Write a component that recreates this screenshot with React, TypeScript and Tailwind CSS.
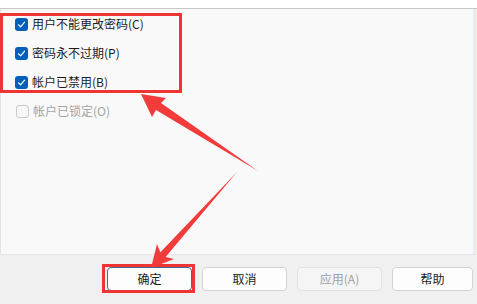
import React from "react";

type Item = { label: string; checked: boolean; disabled?: boolean };

const boxed: Item[] = [
  { label: "用户不能更改密码(C)", checked: true },
  { label: "密码永不过期(P)", checked: true },
  { label: "帐户已禁用(B)", checked: true },
];

function CheckRow({ label, checked, disabled }: Item) {
  return (
    <div className="flex items-center h-[16px] gap-[4px]">
      {checked ? (
        <span className="w-[13px] h-[13px] rounded-[3px] bg-[#005fb8] flex items-center justify-center">
          <svg width="9" height="9" viewBox="0 0 9 9" fill="none">
            <path d="M1.5 4.8 L3.6 6.8 L7.6 2.2" stroke="white" strokeWidth="1.2" strokeLinecap="round" strokeLinejoin="round" />
          </svg>
        </span>
      ) : (
        <span className="w-[13px] h-[13px] rounded-[3px] border border-[#c9c9c9] bg-[#f7f7f7]" />
      )}
      <span className={disabled ? "text-[#a3a3a3]" : "text-[#1b1b1b]"}>{label}</span>
    </div>
  );
}

function Btn({ label, width, disabled, focused }: { label: string; width: string; disabled?: boolean; focused?: boolean }) {
  const base = "h-[24px] rounded-[4px] border flex items-center justify-center text-[12px] " + width;
  const tone = disabled
    ? " bg-[#f5f5f5] border-[#e2e2e2] text-[#a0a0a0]"
    : focused
    ? " bg-[#fdfdfd] border-[#3d6e8e] text-[#1b1b1b]"
    : " bg-[#fdfdfd] border-[#d3d3d3] text-[#1b1b1b]";
  return <div className={base + tone}>{label}</div>;
}

export default function App() {
  return (
    <div
      className="relative w-[477px] h-[304px] flex flex-col bg-white overflow-hidden text-[12px]"
      style={{ fontFamily: '"Noto Sans CJK SC", "Noto Sans", sans-serif' }}
    >
      <div className="h-[9px] bg-white border-b border-[#c8c8c8]" />

      <div className="flex-1 flex">
        <div className="flex-1 bg-[#f9f9f9] border-l border-[#e4e4e4] border-r border-r-[#e6eef6]">
          <div className="mt-[4px] -ml-px w-[182px] border-[3px] border-[#ef3434] pl-[12px] flex flex-col gap-[13px]">
            {boxed.map((it) => (
              <CheckRow key={it.label} {...it} />
            ))}
          </div>
          <div className="mt-[10px] pl-[15px]">
            <CheckRow label="帐户已锁定(O)" checked={false} disabled />
          </div>
        </div>
        <div className="w-[3px] bg-[#efebe7]" />
      </div>

      <div className="h-[50px] bg-[#f0f0f0] border-t border-[#e6e6e6] flex items-start pt-[12px] pl-[107px] gap-[10px]">
        <div className="relative">
          <Btn label="确定" width="w-[85px]" focused />
          <div className="absolute -left-[5px] -right-[3px] -top-[3px] -bottom-[2px] border-[3px] border-[#ef3434]" />
        </div>
        <Btn label="取消" width="w-[85px]" />
        <Btn label="应用(A)" width="w-[85px]" disabled />
        <Btn label="帮助" width="w-[81px]" />
      </div>

      <svg className="absolute inset-0 pointer-events-none" width="477" height="304" viewBox="0 0 477 304">
        <polygon points="141,94 166,98 161,103 258,171 156,110 152,117" fill="#f23b3b" />
        <polygon points="151,268 157,244 160.4,252.3 237,172 165.6,256.9 174,259" fill="#f23b3b" />
      </svg>
    </div>
  );
}
